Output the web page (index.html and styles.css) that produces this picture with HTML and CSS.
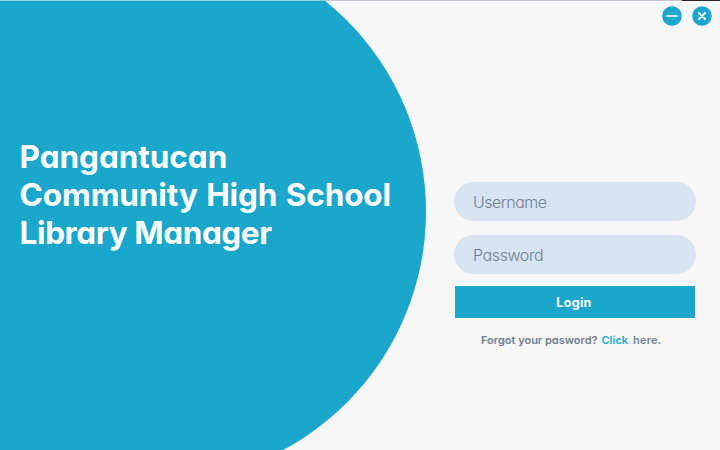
FILE: index.html
```
<!DOCTYPE html>
<html lang="en">
<head>
<meta charset="utf-8">
<title>Library Manager</title>
<link rel="stylesheet" href="styles.css">
</head>
<body>
<div class="window">
  <div class="circle"></div>
  <div class="edge"></div>
  <main class="brand">
    <h1><span class="l1">Pangantucan</span><span class="l2">Community High School</span><span class="l3">Library Manager</span></h1>
  </main>
  <section class="side">
    <div class="controls">
      <button class="control" aria-label="Minimize"><svg viewBox="0 0 20 20"><circle cx="10" cy="10" r="9.8"/><path d="M5 10H15"/></svg></button>
      <button class="control" aria-label="Close"><svg viewBox="0 0 20 20"><circle cx="10" cy="10" r="9.8"/><path d="M6.8 6.8L13.2 13.2M13.2 6.8L6.8 13.2"/></svg></button>
    </div>
    <form class="login">
      <div class="field"><span class="user">Username</span></div>
      <div class="field"><span class="pass">Password</span></div>
      <button class="submit" type="button"><span>Login</span></button>
      <p class="help"><span class="forgot">Forgot your pasword?</span><a class="click">Click</a><span class="here">here.</span></p>
    </form>
  </section>
</div>
</body>
</html>
```
FILE: styles.css
```
* { box-sizing: border-box; }
body { margin: 0; font-family: Inter, "Liberation Sans", sans-serif; font-feature-settings: "cv11" 1; }
.window { position: relative; display: flex; width: 720px; height: 450px; overflow: hidden; background: #f7f7f7; }
.circle { position: absolute; left: 0; top: -59.5px; width: 426.4px; height: 541px; border-radius: 0 270.5px 270.5px 0; background: #1aa7cb; }
.edge { position: absolute; left: 0; top: 0; width: 720px; height: 1px; background: linear-gradient(90deg, #8fd3e5 327px, #c3c8d6 327px 682px, #30252f 682px); }
.brand { position: relative; width: 454px; padding: 138px 0 0 20px; color: #fff; }
h1 { margin: 0 0 0 -0.4px; font-size: 31.5px; font-weight: 700; line-height: 38px; }
h1 span { display: block; width: max-content; white-space: nowrap; }
.l1 { letter-spacing: -0.05px; }
.l2 { letter-spacing: -0.1px; word-spacing: 1px; }
.l3 { letter-spacing: -0.4px; }
.side { position: relative; width: 242px; }
.controls { display: flex; gap: 10px; height: 182px; width: 258px; padding-top: 6px; justify-content: flex-end; }
.control { display: block; width: 20px; height: 20px; padding: 0; border: 0; background: none; }
.control svg { display: block; width: 20px; height: 20px; }
.control circle { fill: #1aa7cb; }
.control path { fill: none; stroke: #fff; stroke-width: 1.7; stroke-linecap: round; }
.field { display: flex; align-items: center; height: 39px; margin-bottom: 14px; padding: 1px 0 0 19px; border-radius: 19.5px; background: #d7e4f2; color: #708090; font-size: 16px; font-weight: 300; }
.user { letter-spacing: -0.5px; }
.pass { letter-spacing: -0.4px; }
.submit { display: block; width: 240px; height: 32px; margin: -2px 1px 0; padding: 0; border: 0; background: #1aa7cb; color: #fff; font: 700 12.5px/34px Inter, sans-serif; letter-spacing: 0.3px; }
.submit span { position: relative; left: -1px; }
.help { display: flex; margin: 15px 0 0 27px; color: #708090; font-size: 11px; font-weight: 600; line-height: 15px; white-space: nowrap; }
.click { margin: 0 5px 0 4px; color: #1aa7cb; }
.here { letter-spacing: 0.2px; }
```
